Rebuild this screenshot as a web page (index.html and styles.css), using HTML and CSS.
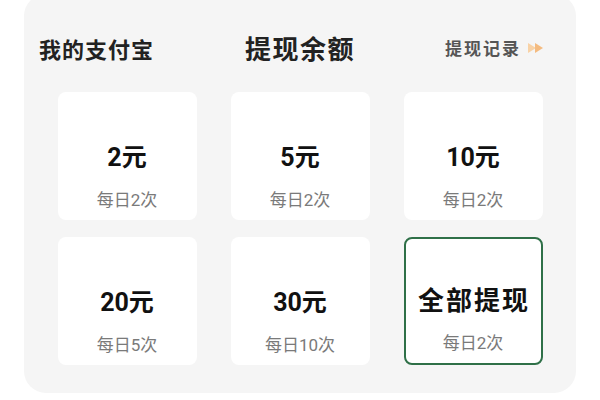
FILE: index.html
```html
<!DOCTYPE html>
<html lang="zh-CN">
<head>
<meta charset="utf-8">
<link rel="stylesheet" href="styles.css">
</head>
<body>
<div class="panel">
  <div class="header">
    <div class="left">我的支付宝</div>
    <div class="title">提现余额</div>
    <div class="right">
      <span class="record">提现记录</span>
      <svg class="arrow" width="18" height="12" viewBox="0 0 18 12">
        <path d="M1 1 L9 6 L1 11 Z" fill="#f8d2a6"/>
        <path d="M8 1 L16 6 L8 11 Z" fill="#f4bb80"/>
      </svg>
    </div>
  </div>
  <div class="grid">
    <div class="card"><div class="amount">2元</div><div class="sub">每日2次</div></div>
    <div class="card"><div class="amount">5元</div><div class="sub">每日2次</div></div>
    <div class="card"><div class="amount">10元</div><div class="sub">每日2次</div></div>
    <div class="card"><div class="amount">20元</div><div class="sub">每日5次</div></div>
    <div class="card"><div class="amount">30元</div><div class="sub">每日10次</div></div>
    <div class="card active"><div class="amount all">全部提现</div><div class="sub">每日2次</div></div>
  </div>
</div>
</body>
</html>
```
FILE: styles.css
```css
html, body {
  margin: 0;
  padding: 0;
  background: #ffffff;
  font-family: "Noto Sans CJK SC", "Noto Sans", sans-serif;
}
.panel {
  margin: -6px 24px 0;
  width: 552px;
  background: #f5f5f5;
  border-radius: 22px;
  padding: 35px 0 28px;
}
.header {
  display: grid;
  grid-template-columns: 1fr auto 1fr;
  align-items: center;
  height: 32px;
  padding: 0 15px;
}
.left {
  font-size: 22px;
  font-weight: 700;
  letter-spacing: 1px;
  color: #222;
}
.title {
  font-size: 26px;
  font-weight: 700;
  letter-spacing: 1.5px;
  color: #222;
}
.right {
  justify-self: end;
  margin-right: 16px;
  display: flex;
  align-items: center;
  gap: 6px;
}
.record {
  font-size: 17px;
  font-weight: 700;
  letter-spacing: 2px;
  color: #555;
}
.arrow {
  display: block;
}
.grid {
  margin-top: 31px;
  display: grid;
  grid-template-columns: repeat(3, 139px);
  grid-auto-rows: 128px;
  column-gap: 34px;
  row-gap: 17px;
  justify-content: center;
}
.card {
  background: #ffffff;
  border-radius: 8px;
  box-sizing: border-box;
  padding-top: 51px;
  display: flex;
  flex-direction: column;
  align-items: center;
}
.amount {
  font-family: "Roboto", "Noto Sans CJK SC", sans-serif;
  font-size: 25px;
  font-weight: 700;
  line-height: 30px;
  color: #111;
}
.sub {
  margin-top: 16px;
  font-family: "Roboto", "Noto Sans CJK SC", sans-serif;
  font-size: 17px;
  line-height: 22px;
  color: #7a7a7a;
}
.card.active {
  border: 2px solid #2f7048;
  padding-top: 47px;
}
.amount.all {
  font-size: 26px;
  letter-spacing: 2px;
  margin-right: -2px;
}
```
